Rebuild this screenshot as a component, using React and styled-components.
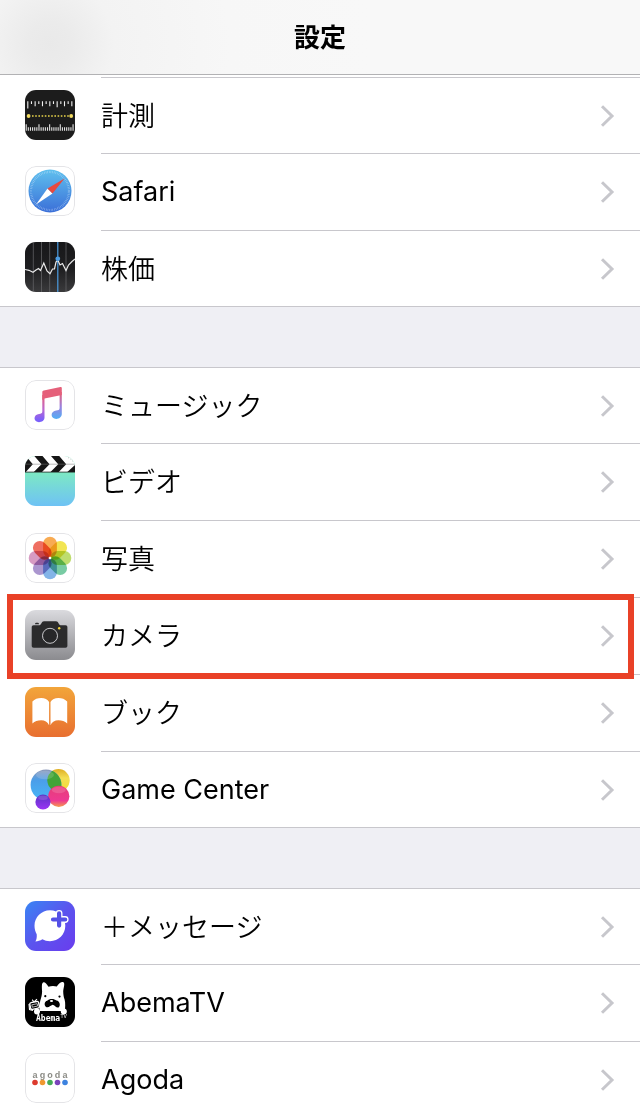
import React from 'react'
import styled, { createGlobalStyle } from 'styled-components'

const GlobalStyle = createGlobalStyle`
    * {
        box-sizing: border-box;
    }
    body {
        margin: 0;
        background: #fff;
        font-family: Inter, "Noto Sans CJK JP", sans-serif;
        color: #000;
    }
`

const Header = styled.header`
    display: flex;
    align-items: center;
    justify-content: center;
    height: 75px;
    padding-top: 2px;
    border-bottom: 1px solid #b2b2b4;
    background: radial-gradient(circle at 50px 44px, #e9e9e9 0px, #ebebeb 22px, #f3f3f3 64px, #f7f7f7 180px, #f8f8f8 320px);
`

const Title = styled.h1`
    margin: 0;
    font-size: 26px;
    line-height: 38px;
    font-weight: 700;
`

const List = styled.main`
    display: flex;
    flex-direction: column;
    gap: 60px;
    background: #efeff4;
`

const Group = styled.ul`
    list-style: none;
    margin: 0;
    padding: 0;
    background: #fff;
    border-top: ${(props) => (props.$continued ? '0' : '1px solid #c8c7cc')};
    border-bottom: 1px solid #c8c7cc;
`

const PreviousRow = styled.li`
    height: 3px;
    margin-left: 101px;
    border-bottom: 1px solid #c8c7cc;
`

const Item = styled.li`
    position: relative;
    height: 77px;

    &:first-child, ${PreviousRow} + & {
        height: 76px;
    }
    &:last-child {
        height: 75px;
    }
`

const Highlight = styled.span`
    position: absolute;
    z-index: 1;
    top: -4px;
    bottom: -4px;
    left: 7px;
    right: 6px;
    border: 6px solid #e94127;
    pointer-events: none;
`

const RowLink = styled.a`
    display: flex;
    align-items: center;
    gap: 26px;
    height: 100%;
    padding-left: 25px;
    color: inherit;
    text-decoration: none;
`

const Body = styled.span`
    flex: 1;
    align-self: stretch;
    display: flex;
    align-items: center;
    justify-content: space-between;
    padding-right: 25px;
    border-bottom: 1px solid #c8c7cc;

    ${Item}:last-child & {
        border-bottom: 0;
    }
`

const Label = styled.span`
    font-size: 27px;
    line-height: 40px;
    font-weight: 400;

    &:lang(ja) {
        padding-bottom: 2px;
        font-family: "Noto Sans CJK JP", sans-serif;
        font-weight: 350;
    }
`

const IconBox = styled.svg`
    display: block;
    flex: none;
    width: 50px;
    height: 50px;
    margin-bottom: 3px;
    border-radius: 11px;
    background: ${(props) => props.$bg};
`

const Border = () => (
    <rect x="0.5" y="0.5" width="49" height="49" rx="10.5" fill="none" stroke="#e4e4e7" />
)

const Icon = ({ bg = '#fff', children }) => (
    <IconBox $bg={bg} viewBox="0 0 50 50" aria-hidden="true">
        {children}
        {bg === '#fff' && <Border />}
    </IconBox>
)

const Chevron = () => (
    <svg width="15" height="24" viewBox="0 0 15 24" aria-hidden="true">
        <path d="M2 2.2 L12 12 L2 21.8" fill="none" stroke="#c7c7cc" strokeWidth="3" />
    </svg>
)

const range = (n) => Array.from({ length: n }, (_, i) => i)

const MeasureIcon = () => (
    <Icon bg="#1c1c1c">
        {range(13).map((i) => (
            <path key={i} d={`M${2.8 + i * 3.67} 11.3v${i === 0 ? 7.2 : i === 8 ? 6 : i % 2 ? 2.8 : 5}`} stroke="#f0f0f0" strokeWidth="1.1" />
        ))}
        <path d="M7 26H44" stroke="#e8d44a" strokeWidth="1.5" strokeDasharray="1.6 1.6" />
        <circle cx="3.6" cy="26" r="1.9" fill="#f3dc62" />
        <circle cx="46.2" cy="26" r="1.9" fill="#f3dc62" />
        {range(23).map((i) => (
            <path key={i} d={`M${1.2 + i * 2.13} 40.8v${i === 0 || i === 6 || i === 11 || i === 16 || i === 22 ? -6.6 : -3.6}`} stroke="#e4e4e4" strokeWidth="1.1" />
        ))}
    </Icon>
)

const SafariIcon = () => (
    <Icon>
        <defs>
            <linearGradient id="safari" x1="0" y1="0" x2="0" y2="1">
                <stop offset="0" stopColor="#5fc0ee" />
                <stop offset="1" stopColor="#3b6fd8" />
            </linearGradient>
        </defs>
        <circle cx="25" cy="25" r="21.5" fill="url(#safari)" />
        <circle cx="25" cy="25" r="19" fill="none" stroke="#d5eafb" strokeWidth="2.2" strokeDasharray="0.5 1.16" opacity="0.6" />
        <path d="M11 38.5 L22.5 22.5 L27.5 27.5 Z" fill="#fff" />
        <path d="M39.5 12.5 L22.5 22.5 L27.5 27.5 Z" fill="#e8493f" />
    </Icon>
)

const StocksIcon = () => (
    <Icon bg="linear-gradient(#171719, #1f1f21 55%, #3a3a3c)">
        <path d="M8.3 0V50M16.5 0V50M24.7 0V50M41 0V50" stroke="#68686b" strokeWidth="0.7" />
        <path d="M32.8 0V50" stroke="#4c9be0" strokeWidth="1.2" />
        <path d="M0 27.5 L4 28.3 L8 30.2 L11 28 L13.5 26.5 L15.5 28.5 L18.8 21 L22 29 L25 31.8 L27.5 27 L29.5 27 L31 20 L32.8 18 L35 23 L37.5 21.5 L41 28.5 L43.5 23 L47 19.5 L50 17" fill="none" stroke="#e9e9e9" strokeWidth="1.2" />
        <circle cx="32.8" cy="16.8" r="2.4" fill="#4c9be0" />
    </Icon>
)

const MusicIcon = () => (
    <Icon>
        <defs>
            <linearGradient id="noteLeft" gradientUnits="userSpaceOnUse" x1="0" y1="16" x2="0" y2="40">
                <stop offset="0" stopColor="#e5607a" />
                <stop offset="0.55" stopColor="#bd68cf" />
                <stop offset="1" stopColor="#7b60fa" />
            </linearGradient>
            <linearGradient id="noteRight" gradientUnits="userSpaceOnUse" x1="0" y1="13" x2="0" y2="38">
                <stop offset="0" stopColor="#e5607a" />
                <stop offset="0.55" stopColor="#9a82df" />
                <stop offset="1" stopColor="#55abf4" />
            </linearGradient>
        </defs>
        <path d="M17.3 15H19.5V37.5C19.5 40.3 16.8 42.2 14 42.2C11.4 42.2 9.5 40.6 9.5 38.3C9.5 35.8 11.5 34.2 14 33.9C16 33.6 17.3 33.5 17.3 31.5Z" fill="url(#noteLeft)" />
        <path d="M34.6 12H36.8V34C36.8 37 34.1 38.9 31.2 38.9C28.6 38.9 26.6 37.3 26.6 35C26.6 32.5 28.6 30.9 31.2 30.6C33.3 30.3 34.6 30.1 34.6 28Z" fill="url(#noteRight)" />
        <path d="M17.3 12.4C17.3 11.3 17.8 10.8 18.8 10.6L35.4 7.1C36.4 6.9 36.8 7.2 36.8 8.1V15L19.5 18.6L17.3 20Z" fill="#e5607a" />
    </Icon>
)

const VideoIcon = () => (
    <Icon bg="linear-gradient(#7de9c3 32%, #6ec2f5)">
        <rect width="50" height="16" fill="#fff" />
        <path d="M9.3 0H17.5L24.5 8.2L17 16H8.8L16.5 8.2ZM26 0H34.2L41.2 8.2L33.7 16H25.5L33.2 8.2ZM0 3L3 2.5L7.8 8.2L0.8 16H0ZM50 9V16H42.3Z" fill="#161616" />
        <path d="M0 8.2H50" stroke="#777" strokeWidth="0.5" />
        <path d="M0 16.1H50" stroke="#222" strokeWidth="0.8" />
        <path d="M43 1.8h.8M45.5 3.2h.8M47 5h.8" stroke="#aaa" strokeWidth="0.8" />
    </Icon>
)

const Petal = styled.rect`
    mix-blend-mode: multiply;
`

const petals = ['#f8a444', '#f1e344', '#b9da62', '#6cc79b', '#78aee6', '#a48dcb', '#d493be', '#ee6354']

const PhotosIcon = () => (
    <Icon>
        {petals.map((color, i) => (
            <Petal key={color} x="18.1" y="3.7" width="13.8" height="20.8" rx="6.9" fill={color} opacity="0.92" transform={`rotate(${i * 45} 25 25)`} />
        ))}
        <circle cx="25" cy="25" r="1.3" fill="#fff" />
    </Icon>
)

const CameraIcon = () => (
    <Icon bg="linear-gradient(#dadade, #8b8b8f)">
        <path d="M8.7 15.2H14.5C16.3 15.2 16.4 11.3 19 11.3H31C33.6 11.3 33.7 15.2 35.5 15.2H40.5C41.8 15.2 42.4 16 42.4 17.2V35.7C42.4 37 41.7 37.7 40.5 37.7H8.7C7.4 37.7 6.7 37 6.7 35.7V17.2C6.7 16 7.4 15.2 8.7 15.2Z" fill="#2b2b2c" />
        <path d="M10 14.2C10 13.1 10.7 12.7 12 12.7C13.3 12.7 14 13.1 14 14.2Z" fill="#2b2b2c" />
        <circle cx="25" cy="25.8" r="7.5" fill="#272728" stroke="#c9c9cc" strokeWidth="1" />
        <circle cx="34.2" cy="18.3" r="1.2" fill="#f2d43d" />
    </Icon>
)

const BooksIcon = () => (
    <Icon bg="linear-gradient(#f2a53a, #e86f30)">
        <path d="M24.1 38.3C22.6 35 19.8 33.3 16.2 33.3C12.6 33.3 9.8 34.4 7.4 36.5V14.5C9.8 12 12.6 10.9 16.2 10.9C19.8 10.9 22.6 12.3 24.1 15Z" fill="#fff" />
        <path d="M25.5 38.3C27 35 29.8 33.3 33.4 33.3C37 33.3 39.8 34.4 42.2 36.5V14.5C39.8 12 37 10.9 33.4 10.9C29.8 10.9 27 12.3 25.5 15Z" fill="#fff" />
    </Icon>
)

const GameCenterIcon = () => (
    <Icon>
        <defs>
            <linearGradient id="gcBlue" x1="0" y1="0" x2="0" y2="1">
                <stop offset="0" stopColor="#8d99ba" />
                <stop offset="0.35" stopColor="#4b9ee9" />
                <stop offset="1" stopColor="#48b6f7" />
            </linearGradient>
            <linearGradient id="gcYellow" x1="0" y1="0" x2="0" y2="1">
                <stop offset="0" stopColor="#dfaf25" />
                <stop offset="0.4" stopColor="#f3df55" />
                <stop offset="1" stopColor="#f3dc31" />
            </linearGradient>
            <linearGradient id="gcPink" x1="0" y1="0" x2="0" y2="1">
                <stop offset="0" stopColor="#e63e76" />
                <stop offset="0.7" stopColor="#ee3992" />
                <stop offset="1" stopColor="#f59a4c" />
            </linearGradient>
            <linearGradient id="gcPurple" x1="0" y1="0" x2="0" y2="1">
                <stop offset="0" stopColor="#5933c3" />
                <stop offset="1" stopColor="#9b36f5" />
            </linearGradient>
            <clipPath id="gcOverlap">
                <circle cx="21" cy="22" r="15.4" />
            </clipPath>
        </defs>
        <circle cx="33.5" cy="17.3" r="11.2" fill="url(#gcYellow)" />
        <circle cx="21" cy="22" r="15.4" fill="url(#gcBlue)" />
        <circle cx="33.5" cy="17.3" r="11.2" fill="#42a438" clipPath="url(#gcOverlap)" />
        <ellipse cx="20" cy="12" rx="9" ry="4.2" fill="#fff" opacity="0.15" />
        <circle cx="33.8" cy="33.3" r="10.6" fill="url(#gcPink)" />
        <ellipse cx="33.8" cy="27" rx="7" ry="3.3" fill="#fff" opacity="0.15" />
        <circle cx="18" cy="39" r="7.6" fill="url(#gcPurple)" />
        <ellipse cx="18" cy="34.7" rx="4.8" ry="2.2" fill="#fff" opacity="0.15" />
    </Icon>
)

const PlusMessageIcon = () => (
    <Icon bg="linear-gradient(135deg, #3886f4, #5b54ee 50%, #6a3cee)">
        <path d="M25 9.3C33.6 9.3 40.3 16.2 40.3 24.8C40.3 33.6 33.6 40.2 25 40.2C22 40.2 19.6 39.5 17.4 38.3C15.2 39.6 12.7 40.4 10.4 40.4C11.6 38.5 12 36.2 11.7 33.2C10.3 30.8 9.5 28 9.5 24.8C9.5 16.2 16.4 9.3 25 9.3Z" fill="#fff" />
        <path d="M34.1 12.4V24.6M28 18.5H40.2" stroke="#fff" strokeWidth="6.8" strokeLinecap="round" />
        <path d="M34.1 12.4V24.6M28 18.5H40.2" stroke="#5450e6" strokeWidth="4.2" strokeLinecap="round" />
    </Icon>
)

const AbemaIcon = () => (
    <Icon bg="#000">
        <path d="M18.5 5.2C19.8 4.8 21.8 7 23.5 9.8C26 8.8 29.2 8.8 31.8 9.5C33.6 6.8 36.6 4.3 38.4 5.3C40.2 6.4 38.6 10.5 38.2 14.2C38.3 17.6 38.7 20 39.6 22.5C40.6 26 40.2 31 39.8 34H14.8C14.3 31 14.4 27 15.2 24C16.4 20 17 17.5 17.1 14.5C17 11 16.2 6 18.5 5.2Z" fill="#fff" />
        <circle cx="20.3" cy="19.2" r="1.1" />
        <circle cx="34.5" cy="19.6" r="1.1" />
        <path d="M22.2 23.8C24 21.5 29 21.2 31.5 23.5C34.8 24 36 28.5 33.5 30.5C31 31.2 30.5 28.5 27.8 27.8C25 28.5 24 31 21.5 30.2C18.5 28.5 19.5 24.2 22.2 23.8Z" />
        <ellipse cx="26.5" cy="24" rx="1.6" ry="0.9" fill="#fff" />
        <path d="M14 35H41V38H14Z" />
        <circle cx="12" cy="34.6" r="3" fill="#fff" />
        <circle cx="38.8" cy="34.6" r="3" fill="#fff" />
        <rect x="5.1" y="25" width="9" height="6.8" rx="1.6" fill="#000" stroke="#fff" strokeWidth="1.4" transform="rotate(-12 9.6 28.4)" />
        <path d="M6.8 27.8L12.2 26.7L12.7 29L7.3 30.2Z" fill="none" stroke="#fff" strokeWidth="0.7" />
        <path d="M8.8 24.8L7.2 22.7M9.3 24.7L12 22.2M4 27L4.5 32.5L8 33.5" fill="none" stroke="#fff" strokeWidth="1.1" />
        <text x="11" y="43.7" fill="#fff" fontFamily="DejaVu Sans Mono, monospace" fontSize="8" fontWeight="700">Abema</text>
        <text x="35.4" y="41" fill="#fff" fontFamily="Liberation Sans, sans-serif" fontSize="5">TV</text>
    </Icon>
)

const agoda = [
    ['a', '#dc3a2e'],
    ['g', '#f0982f'],
    ['o', '#45ab57'],
    ['d', '#7b43bb'],
    ['a', '#3d82df'],
]

const AgodaIcon = () => (
    <Icon>
        {agoda.map(([letter, color], i) => (
            <g key={color}>
                <text x={10 + i * 7.5} y="24.6" textAnchor="middle" fill="#8c8c86" fontFamily="Liberation Sans, sans-serif" fontSize="9" fontWeight="700">{letter}</text>
                <circle cx={10 + i * 7.5} cy="29.5" r="2.8" fill={color} />
            </g>
        ))}
    </Icon>
)

const groups = [
    [
        { label: '計測', icon: MeasureIcon, lang: 'ja' },
        { label: 'Safari', icon: SafariIcon, lang: 'en' },
        { label: '株価', icon: StocksIcon, lang: 'ja' },
    ],
    [
        { label: 'ミュージック', icon: MusicIcon, lang: 'ja' },
        { label: 'ビデオ', icon: VideoIcon, lang: 'ja' },
        { label: '写真', icon: PhotosIcon, lang: 'ja' },
        { label: 'カメラ', icon: CameraIcon, lang: 'ja', highlighted: true },
        { label: 'ブック', icon: BooksIcon, lang: 'ja' },
        { label: 'Game Center', icon: GameCenterIcon, lang: 'en' },
    ],
    [
        { label: '＋メッセージ', icon: PlusMessageIcon, lang: 'ja' },
        { label: 'AbemaTV', icon: AbemaIcon, lang: 'en' },
        { label: 'Agoda', icon: AgodaIcon, lang: 'en' },
    ],
]

const Row = ({ item }) => {
    const ItemIcon = item.icon

    return (
        <Item>
            <RowLink href="#">
                <ItemIcon />
                <Body>
                    <Label lang={item.lang}>{item.label}</Label>
                    <Chevron />
                </Body>
            </RowLink>
            {item.highlighted && <Highlight />}
        </Item>
    )
}

const App = () => {
    return (
        <>
            <GlobalStyle />
            <Header>
                <Title lang="ja">設定</Title>
            </Header>
            <List>
                {groups.map((items, i) => (
                    <Group key={i} $continued={i === 0}>
                        {i === 0 && <PreviousRow aria-hidden="true" />}
                        {items.map((item) => (
                            <Row key={item.label} item={item} />
                        ))}
                    </Group>
                ))}
            </List>
        </>
    )
}

export default App
